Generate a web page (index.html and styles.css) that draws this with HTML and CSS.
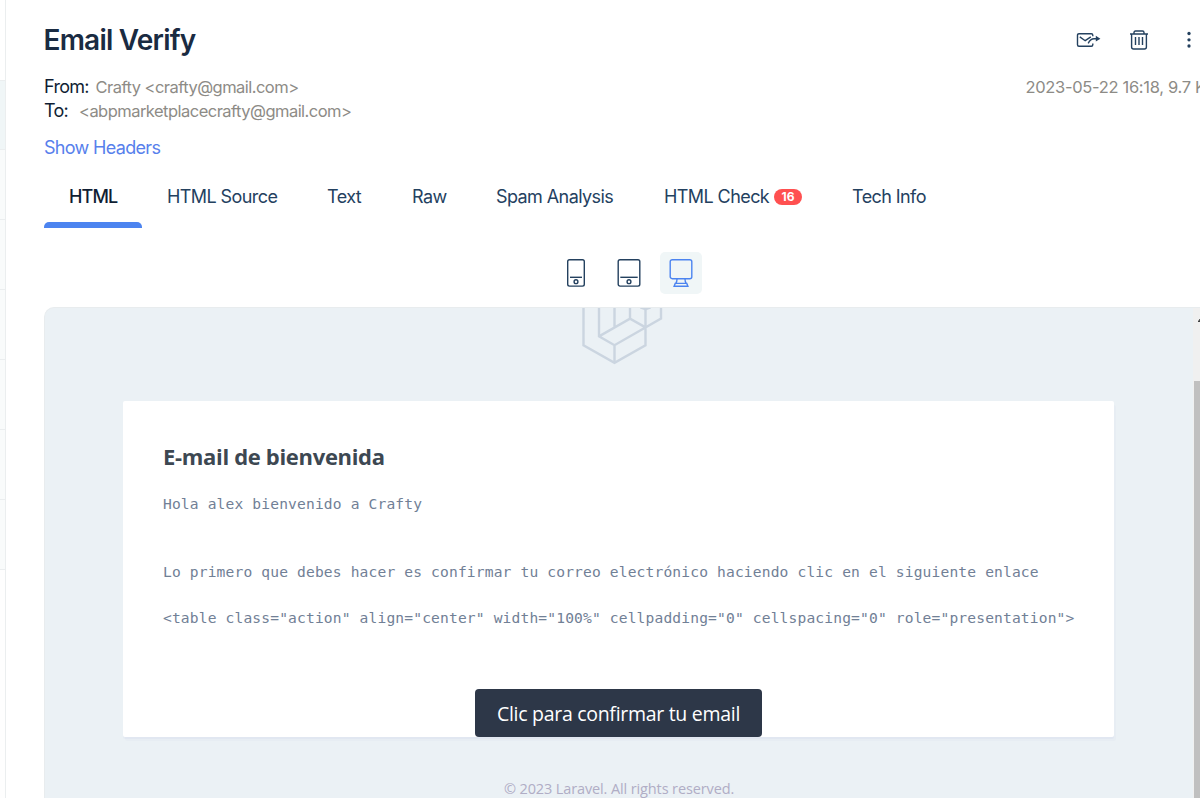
FILE: index.html
```html
<!DOCTYPE html>
<html lang="en">
<head>
<meta charset="utf-8">
<title>Email Verify</title>
<link rel="stylesheet" href="styles.css">
</head>
<body>
<div class="app">
  <aside class="list">
    <div class="item blank"></div>
    <div class="item selected"></div>
    <div class="item"></div>
    <div class="item"></div>
    <div class="item"></div>
    <div class="item"></div>
    <div class="item"></div>
    <div class="item"></div>
  </aside>
  <main class="message">
    <header class="top">
      <h1 class="title"><span>Email Verify</span></h1>
      <div class="actions">
        <svg class="icon forward" width="26" height="18" viewBox="0 0 26 18"><path d="M16.8 4.2V3.2Q16.8 1.7 15.3 1.7H3Q1.5 1.7 1.5 3.2V12.8Q1.5 14.3 3 14.3H15.3Q16.8 14.3 16.8 12.8V11.4M3.8 4.9L9.2 8.7L14.8 4.9M12.2 11.4C13.8 8.2 15.5 6.8 18 6.8H22"/><path class="solid" d="M19.8 3.8L24.4 6.8L19.8 9.5Z"/></svg>
        <svg class="icon trash" width="20" height="20" viewBox="0 0 20 20"><path d="M1 4H19M5 3.8V2.5Q5 1 6.5 1H13.5Q15 1 15 2.5V3.8M2.6 4V17Q2.6 19 4.6 19H15.4Q17.4 19 17.4 17V4M6.5 7V15M10 7V15M13.5 7V15"/></svg>
        <svg class="icon dots" width="4" height="18" viewBox="0 0 4 18"><circle cx="2" cy="2.5" r="1.65"/><circle cx="2" cy="8.8" r="1.65"/><circle cx="2" cy="15" r="1.65"/></svg>
      </div>
    </header>
    <section class="meta">
      <div class="people">
        <div class="person"><span class="label from">From:</span><span class="address">Crafty &lt;crafty@gmail.com&gt;</span></div>
        <div class="person"><span class="label to">To:</span><span class="address">&lt;abpmarketplacecrafty@gmail.com&gt;</span></div>
      </div>
      <div class="date">2023-05-22 16:18, 9.7 K</div>
    </section>
    <div class="headers"><a>Show Headers</a></div>
    <nav class="tabs">
      <div class="tab active"><span>HTML</span></div>
      <div class="tab source"><span>HTML Source</span></div>
      <div class="tab text"><span>Text</span></div>
      <div class="tab raw"><span>Raw</span></div>
      <div class="tab spam"><span>Spam Analysis</span></div>
      <div class="tab check"><span>HTML Check</span><b class="badge">16</b></div>
      <div class="tab tech"><span>Tech Info</span></div>
    </nav>
    <div class="devices">
      <div class="device"><svg class="icon" width="20" height="30" viewBox="0 0 20 30"><rect x="1.7" y="1.7" width="16.6" height="26.4" rx="1.8"/><path d="M4 19.3H16"/><circle cx="10" cy="23.7" r="1.9"/></svg></div>
      <div class="device"><svg class="icon" width="24" height="30" viewBox="0 0 24 30"><rect x="1.2" y="1.7" width="21.6" height="26.4" rx="1.8"/><path d="M3.3 19.3H20.7"/><circle cx="12" cy="23.7" r="1.9"/></svg></div>
      <div class="device on"><svg class="icon" width="24" height="30" viewBox="0 0 24 30"><rect x="1.2" y="1.7" width="21.6" height="19" rx="2"/><path d="M8 21Q8 24 6.7 25.4M16 21Q16 24 17.3 25.4M6.2 25.4H17.8L18.9 28.2H5.1Z"/></svg></div>
    </div>
    <section class="frame">
      <div class="mail">
        <div class="brand"><svg class="logo" width="84" height="58" viewBox="0 0 84 58"><path d="M3.5 0V37.2L34.5 54.8L65.5 37.2V0M19 0V28.4L34.5 37.2L81 10.6V0M34.5 37.2V54.8M34.5 0V19.2M19 28.4L50 10.6L65.5 19.4M50 0V10.6"/><path class="tip" d="M60 0H71V.6L65.5 2.6L60 .6Z"/></svg></div>
        <article class="card">
          <h2 class="welcome"><span>E-mail de bienvenida</span></h2>
          <pre class="body">Hola alex bienvenido a Crafty


Lo primero que debes hacer es confirmar tu correo electrónico haciendo clic en el siguiente enlace

&lt;table class="action" align="center" width="100%" cellpadding="0" cellspacing="0" role="presentation"&gt;</pre>
          <a class="button"><span>Clic para confirmar tu email</span></a>
        </article>
        <footer class="footer"><span>© 2023 Laravel. All rights reserved.</span></footer>
      </div>
      <div class="scrollbar">
        <svg class="arrow" width="6" height="4" viewBox="0 0 6 4"><path d="M4 3V1.5H5.2V0H6V3Z"/></svg>
        <div class="thumb"></div>
      </div>
    </section>
  </main>
</div>
</body>
</html>
```
FILE: styles.css
```css
* { box-sizing: border-box; }
body { margin: 0; background: #fff; font-family: Inter, "Liberation Sans", sans-serif; }
.app { display: flex; width: 1200px; height: 798px; overflow: hidden; }
.list { flex: none; width: 6px; background: #fefefe; border-right: 1px solid #ebeeef; }
.item { height: 70px; background: #f9fbfb; border-bottom: 1px solid #ebeeef; }
.item.blank { height: 81px; background: #fff; }
.item.selected { height: 69px; background: #f0f6f7; }
.message { flex: none; width: 1194px; padding-left: 38px; display: flex; flex-direction: column; }
.top { display: flex; justify-content: space-between; height: 75px; padding-top: 20px; }
.title { margin: 0 0 0 -.5px; font-size: 28px; line-height: 41px; font-weight: 600; letter-spacing: -.78px; color: #1a2b42; white-space: nowrap; }
.actions { display: flex; align-items: center; height: 40px; padding-right: 9px; }
.icon { display: block; fill: none; stroke: #24415f; stroke-width: 1.4; }
.icon .solid { fill: #24415f; stroke: none; }
.forward { margin: 1px 27px 0 0; }
.trash { margin-top: -1px; }
.dots { fill: #24415f; stroke: none; margin-left: 38.5px; }
.meta { display: flex; height: 48px; white-space: nowrap; }
.people { width: 981.5px; flex: none; }
.person { display: flex; height: 24px; line-height: 23px; }
.label { color: #101e33; font-size: 18px; letter-spacing: -.7px; }
.from { width: 51.5px; }
.to { width: 35px; }
.address, .date { color: #8d8b86; font-size: 16.5px; letter-spacing: -.53px; line-height: 24px; }
.date { letter-spacing: -.32px; }
.headers { height: 50px; padding-top: 12px; font-size: 18px; line-height: 26px; letter-spacing: -.7px; color: #5780ec; }
.headers a { letter-spacing: -.68px; }
.tabs { display: flex; height: 55px; white-space: nowrap; }
.tab { flex: none; padding: 11px 0 0 25px; font-size: 18px; line-height: 26px; height: 55px; letter-spacing: -.58px; color: #24415f; display: flex; }
.tab.active { flex-direction: column; width: 98px; color: #101e33; font-weight: 500; letter-spacing: -.85px; }
.tab.active::after { content: ""; width: 98px; height: 6px; margin: 12px 0 0 -25px; border-radius: 5px 5px 0 0; background: #4c84f0; }
.source { width: 160px; }
.text { width: 85px; }
.raw { width: 84px; }
.spam { width: 168px; }
.check { width: 188px; justify-content: flex-start; }
.check span { width: 110px; }
.tech { width: 124px; }
.badge { width: 28px; height: 16px; margin-top: 5px; border-radius: 8px; background: #ff5050; color: #fff; font-size: 12px; line-height: 15px; font-weight: 700; text-align: center; letter-spacing: 0; }
.devices { display: flex; height: 79px; padding: 24px 0 0 511px; gap: 10.5px; }
.device { width: 42px; height: 42px; border-radius: 5px; display: flex; align-items: center; justify-content: center; }
.device.on { background: #f0f6f7; }
.device.on .icon { stroke: #4c84f0; }
.frame { display: flex; height: 491px; border: 1px solid #e8ecee; border-width: 1px 0 0 1px; border-radius: 10px 0 0 0; overflow: hidden; background: #ebf1f5; }
.mail { width: 1148px; height: 490px; flex: none; }
.brand { height: 93px; padding-left: 535px; }
.logo { display: block; fill: none; stroke: #cbd5e0; stroke-width: 2.4; }
.logo .tip { fill: #cbd5e0; stroke: none; }
.card { width: 991px; height: 336px; margin-left: 78px; padding: 40px 40px 0; background: #fff; border-radius: 2px; box-shadow: 0 2px 0 rgba(0, 0, 150, .025), 2px 4px 0 rgba(0, 0, 150, .015); }
.welcome { margin: 0; font: 700 22px/30px "Open Sans", "Noto Sans", sans-serif; letter-spacing: -.32px; color: #3d4852; white-space: nowrap; }
.body { margin: 22px 0 0; font: 14.6px/22.8px "DejaVu Sans Mono", monospace; letter-spacing: .15px; color: #718096; }
.button { display: block; width: 287px; height: 48px; margin: 59px auto 0 312px; border-radius: 4px; background: #2d3748; color: #fff; text-align: center; white-space: nowrap; font: 19.5px/50px "Open Sans", "Noto Sans", sans-serif; letter-spacing: -.29px; }
.footer { padding-top: 40px; text-align: center; font: 14.5px/24px "Open Sans", "Noto Sans", sans-serif; letter-spacing: -.12px; color: #b0adc5; }
.scrollbar { width: 7px; height: 490px; background: #f0f0f0; padding-top: 11px; }
.arrow { display: block; margin-left: 1px; fill: #404040; }
.thumb { margin: 58px 0 0 1px; height: 430px; background: #c0c0c0; }
```
